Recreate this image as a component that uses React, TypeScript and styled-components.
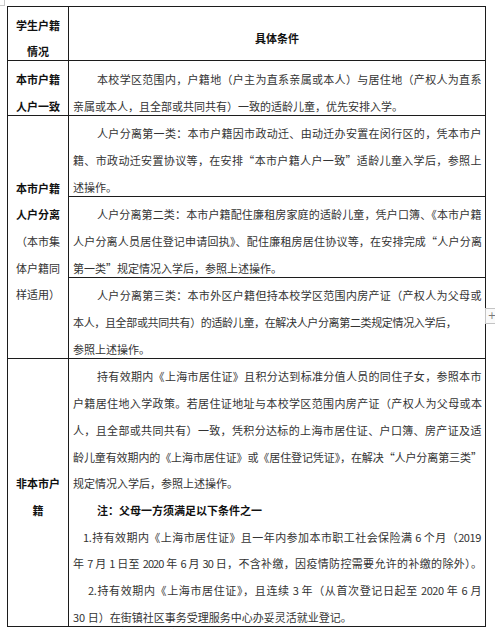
import styled, { createGlobalStyle } from 'styled-components'

const GlobalStyle = createGlobalStyle`
  html, body {
    margin: 0;
    padding: 0;
    background: #fff;
  }
  body {
    font-family: "Noto Sans CJK SC", "Noto Sans", sans-serif;
  }
`

type LineData = {
  text: string
  full?: boolean
  indent?: number
  spacing?: number
  bold?: boolean
}

const localSame: LineData[] = [
  { text: '本校学区范围内，户籍地（户主为直系亲属或本人）与居住地（产权人为直系', full: true, indent: 24 },
  { text: '亲属或本人，且全部或共同共有）一致的适龄儿童，优先安排入学。' },
]

const split1: LineData[] = [
  { text: '人户分离第一类：本市户籍因市政动迁、由动迁办安置在闵行区的，凭本市户', full: true, indent: 24 },
  { text: '籍、市政动迁安置协议等，在安排“本市户籍人户一致”适龄儿童入学后，参照上', full: true },
  { text: '述操作。' },
]

const split2: LineData[] = [
  { text: '人户分离第二类：本市户籍配住廉租房家庭的适龄儿童，凭户口簿、《本市户籍', full: true, indent: 24 },
  { text: '人户分离人员居住登记申请回执》、配住廉租房居住协议等，在安排完成“人户分离', full: true, spacing: -0.9 },
  { text: '第一类”规定情况入学后，参照上述操作。' },
]

const split3: LineData[] = [
  { text: '人户分离第三类：本市外区户籍但持本校学区范围内房产证（产权人为父母或', full: true, indent: 24 },
  { text: '本人，且全部或共同共有）的适龄儿童，在解决人户分离第二类规定情况入学后，', spacing: -0.35 },
  { text: '参照上述操作。' },
]

const nonLocal: LineData[] = [
  { text: '持有效期内《上海市居住证》且积分达到标准分值人员的同住子女，参照本市', full: true, indent: 24 },
  { text: '户籍居住地入学政策。若居住证地址与本校学区范围内房产证（产权人为父母或本', full: true, spacing: -0.9 },
  { text: '人，且全部或共同共有）一致，凭积分达标的上海市居住证、户口簿、房产证及适', full: true },
  { text: '龄儿童有效期内的《上海市居住证》或《居住登记凭证》，在解决“人户分离第三类”', full: true, spacing: -0.9 },
  { text: '规定情况入学后，参照上述操作。' },
  { text: '注：父母一方须满足以下条件之一', indent: 24, bold: true },
  { text: '1.持有效期内《上海市居住证》且一年内参加本市职工社会保险满 6 个月（2019', full: true, indent: 10 },
  { text: '年 7 月 1 日至 2020 年 6 月 30 日，不含补缴，因疫情防控需要允许的补缴的除外）。', full: true, spacing: -0.9 },
  { text: '2.持有效期内《上海市居住证》，且连续 3 年（从首次登记日起至 2020 年 6 月', full: true, indent: 15 },
  { text: '30 日）在街镇社区事务受理服务中心办妥灵活就业登记。' },
]

const Lines = ({ items }: { items: LineData[] }) => (
  <>
    {items.map((l, i) => (
      <Line
        key={i}
        $full={l.full}
        $indent={l.indent}
        $spacing={l.spacing ?? (l.full ? -0.4 : 0)}
        $bold={l.bold}
      >
        {l.text}
      </Line>
    ))}
  </>
)

const App = () => {
  return (
    <Page>
      <GlobalStyle />
      <CornerMark />
      <Table>
        <colgroup>
          <Col $w={61} />
          <Col $w={417} />
        </colgroup>
        <tbody>
          <tr>
            <Label>
              <Line $center $bold>学生户籍</Line>
              <Line $center $bold>情况</Line>
            </Label>
            <Body $middle>
              <Line $center $bold>具体条件</Line>
            </Body>
          </tr>
          <tr>
            <Label>
              <Line $center $bold>本市户籍</Line>
              <Line $center $bold>人户一致</Line>
            </Label>
            <Body>
              <Lines items={localSame} />
            </Body>
          </tr>
          <tr>
            <Label rowSpan={3}>
              <Line $center $bold>本市户籍</Line>
              <Line $center $bold>人户分离</Line>
              <Line $center>（本市集</Line>
              <Line $center>体户籍同</Line>
              <Line $center>样适用）</Line>
            </Label>
            <Body>
              <Lines items={split1} />
            </Body>
          </tr>
          <tr>
            <Body>
              <Lines items={split2} />
            </Body>
          </tr>
          <tr>
            <Body>
              <Lines items={split3} />
            </Body>
          </tr>
          <tr>
            <Label>
              <Line $center $bold>非本市户</Line>
              <Line $center $bold>籍</Line>
            </Label>
            <Body>
              <Lines items={nonLocal} />
            </Body>
          </tr>
        </tbody>
      </Table>
      <NextHeading>四、预约验证及验证提示</NextHeading>
      <ResizeHandle>+</ResizeHandle>
    </Page>
  )
}

export default App

const Page = styled.div`
  position: relative;
  width: 495px;
  height: 629px;
  overflow: hidden;
  padding: 6px 0 0 7px;
  box-sizing: border-box;
`

const CornerMark = styled.div`
  position: absolute;
  left: 0;
  top: 0;
  width: 4px;
  height: 5px;
  border-right: 1px solid #c8c8c8;
  border-bottom: 1px solid #c8c8c8;
`

const Table = styled.table`
  border-collapse: collapse;
  table-layout: fixed;
  width: 478px;
  font-size: 11px;
  color: #333;

  td {
    border: 1px solid #1c1c1c;
  }
`

const Col = styled.col<{ $w: number }>`
  width: ${p => p.$w}px;
`

const Label = styled.td`
  padding: 0;
  text-align: center;
  vertical-align: middle;
  color: #1a1a1a;
`

const Body = styled.td<{ $middle?: boolean }>`
  padding: 0 4px;
  vertical-align: ${p => (p.$middle ? 'middle' : 'top')};
`

const Line = styled.div<{
  $full?: boolean
  $center?: boolean
  $indent?: number
  $spacing?: number
  $bold?: boolean
}>`
  box-sizing: border-box;
  height: 26.7px;
  padding-top: 9.5px;
  line-height: 17px;
  text-indent: ${p => p.$indent ?? 0}px;
  text-align: ${p => (p.$center ? 'center' : 'justify')};
  text-align-last: ${p => (p.$center ? 'center' : p.$full ? 'justify' : 'left')};
  letter-spacing: ${p => p.$spacing ?? 0}px;
  font-weight: ${p => (p.$bold ? 700 : 400)};
  color: ${p => (p.$bold ? '#111' : '#333')};
`

const NextHeading = styled.h2`
  margin: 0 0 0 36px;
  font-size: 17px;
  line-height: 20px;
  font-weight: 700;
  color: #111;
`

const ResizeHandle = styled.div`
  position: absolute;
  left: 485px;
  top: 308px;
  width: 12px;
  height: 14px;
  border: 1px solid #c4c4c4;
  border-right: none;
  background: #fafafa;
  color: #777;
  font-family: "DejaVu Sans", sans-serif;
  font-size: 10px;
  line-height: 14px;
  text-align: center;
`
